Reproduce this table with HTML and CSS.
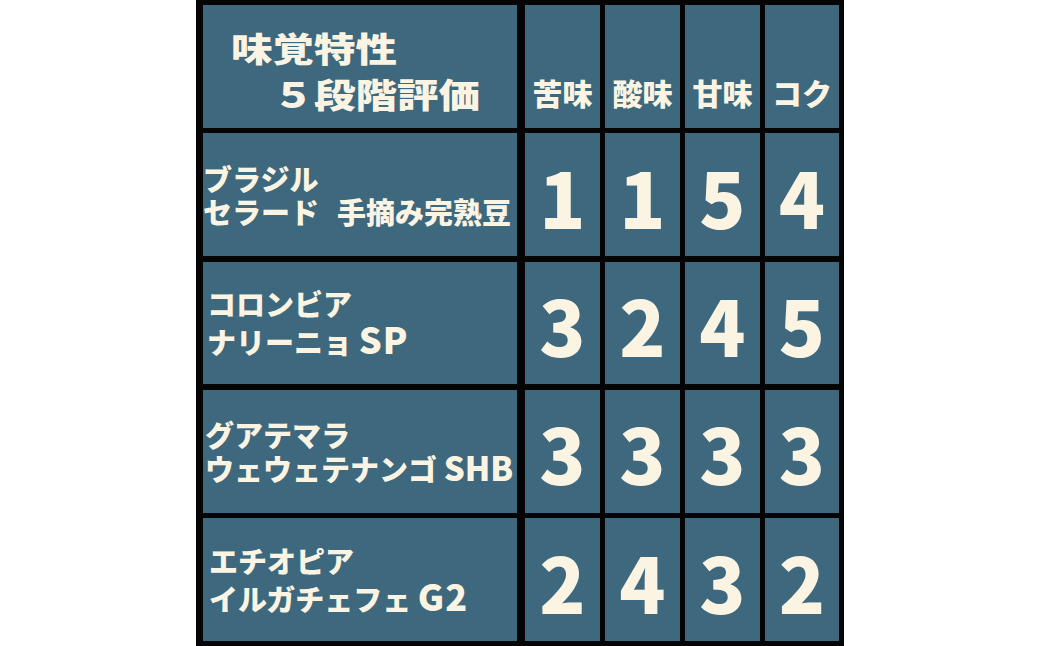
FILE: index.html
```html
<!DOCTYPE html>
<html lang="ja">
<head>
<meta charset="utf-8">
<title>味覚特性 5段階評価</title>
<link rel="stylesheet" href="styles.css">
</head>
<body>
<div class="chart">
  <div class="cell title-cell">
    <div class="title">
      <div>味覚特性</div>
      <div>　５段階評価</div>
    </div>
  </div>
  <div class="cell head">苦味</div>
  <div class="cell head">酸味</div>
  <div class="cell head">甘味</div>
  <div class="cell head">コク</div>

  <div class="cell name name-1"><div>ブラジル</div><div>セラード<span class="gap"></span>手摘み完熟豆</div></div>
  <div class="cell score">1</div>
  <div class="cell score">1</div>
  <div class="cell score">5</div>
  <div class="cell score">4</div>

  <div class="cell name name-2"><div>コロンビア</div><div>ナリーニョ <span class="latin latin-wide">SP</span></div></div>
  <div class="cell score">3</div>
  <div class="cell score">2</div>
  <div class="cell score">4</div>
  <div class="cell score">5</div>

  <div class="cell name name-3"><div>グアテマラ</div><div>ウェウェテナンゴ <span class="latin">SHB</span></div></div>
  <div class="cell score">3</div>
  <div class="cell score">3</div>
  <div class="cell score">3</div>
  <div class="cell score">3</div>

  <div class="cell name name-4"><div>エチオピア</div><div>イルガチェフェ <span class="latin latin-wide">G2</span></div></div>
  <div class="cell score">2</div>
  <div class="cell score">4</div>
  <div class="cell score">3</div>
  <div class="cell score">2</div>
</div>
</body>
</html>
```

FILE: styles.css
```css
html, body {
  margin: 0;
  padding: 0;
  background: #ffffff;
}

body {
  font-family: "Noto Sans CJK JP", "Noto Sans", sans-serif;
  font-weight: 900;
  color: #fbf4e3;
}

.chart {
  width: 648px;
  height: 646px;
  box-sizing: border-box;
  margin: 0 auto;
  background: #050505;
  padding: 5px 5px 5px 7px;
  display: grid;
  grid-template-columns: 317px 75px 75px 75px 74px;
  grid-template-rows: repeat(5, 1fr);
  column-gap: 5px;
  row-gap: 5.5px;
}

.cell {
  background: #3d687d;
  overflow: hidden;
}

.title-cell,
.name {
  margin-right: 3px;
}

.title-cell {
  padding: 20px 0 0 28px;
}

.title {
  font-size: 34px;
  line-height: 46px;
  white-space: nowrap;
  transform: scaleX(1.22);
  transform-origin: left top;
}

.head {
  display: flex;
  align-items: flex-end;
  justify-content: center;
  font-size: 30px;
  line-height: 36px;
  padding-bottom: 18px;
  white-space: nowrap;
}

.name {
  display: flex;
  flex-direction: column;
  justify-content: center;
  font-size: 29px;
  line-height: 33px;
  white-space: nowrap;
}

.gap {
  display: inline-block;
  width: 18px;
}

.latin {
  font-size: 33px;
  line-height: 1;
}

.latin-wide {
  font-size: 36px;
  letter-spacing: 1px;
}

.name-1 { padding-left: 0; }
.name-2 { padding-left: 4px; }
.name-3 { padding-left: 2px; }
.name-4 { padding-left: 6px; }

.score {
  display: flex;
  align-items: center;
  justify-content: center;
  font-size: 76px;
  line-height: 1;
  padding-top: 2px;
}
```
